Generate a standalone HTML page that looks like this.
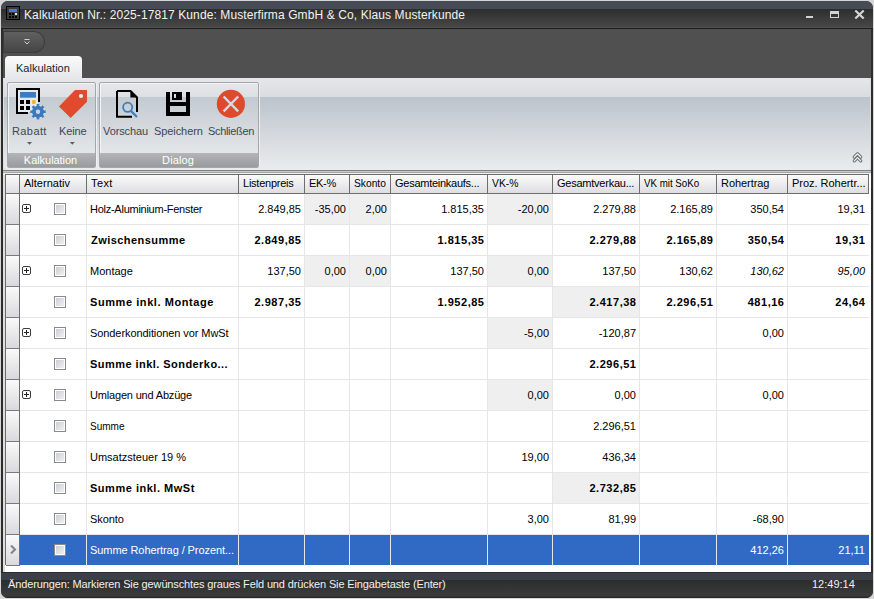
<!DOCTYPE html>
<html><head><meta charset="utf-8">
<style>
*{box-sizing:border-box;margin:0;padding:0}
html,body{width:874px;height:599px;overflow:hidden;background:#d6d6d6;font-family:"Liberation Sans",sans-serif;font-size:11px;color:#000}
.a{position:absolute}
#win{left:1px;top:1px;width:872px;height:597px;border-radius:7px;background:#2d2d2d}
#tb{left:1px;top:1px;width:872px;height:28px;border-radius:7px 7px 0 0;background:linear-gradient(#474b56 0,#474b56 8px,#2e2e2e 8px,#474747 26px,#585858 27px)}
#tbline{left:1px;top:28px;width:872px;height:1px;background:#1c1c1c}
#title{left:24px;top:8px;font-size:12px;color:#f2f2f2;white-space:nowrap;line-height:14px;letter-spacing:0.1px}
#mid{left:3px;top:29px;width:868px;height:50px;background:#505050}
#qat{left:3px;top:31px;width:42px;height:22px;border-radius:0 11px 11px 0;background:linear-gradient(#616161,#444444);box-shadow:inset 0 0 0 1px #3c3c3c}
#tab{left:5px;top:56px;width:77px;height:24px;border-radius:4px 4px 0 0;background:linear-gradient(#fbfbfb,#e4e6e9)}
#rib{left:4px;top:78px;width:866px;box-shadow:1px 0 0 #dcdcdc;height:92px;border-radius:0 4px 4px 4px;background:linear-gradient(#e5e7ea 0,#d9dce0 19px,#bcc3cb 19px,#e9ecee 91px)}
.grp{top:82px;height:86px;border:1px solid #a3a7ac;border-radius:2px;background:rgba(255,255,255,0.12);box-shadow:inset 1px 1px 0 #f3f4f6, 1px 0 0 #eef0f2}
.gcap{left:0;bottom:0;width:100%;height:14px;border-radius:0 0 1px 1px;background:linear-gradient(#b3b5b7,#999b9d);color:#fff;text-align:center;line-height:14px;font-size:11px}
.rl{font-size:11px;color:#3e4650;white-space:nowrap;line-height:13px}
.arr{width:0;height:0;border-left:3px solid transparent;border-right:3px solid transparent;border-top:3px solid #5a5f66}
#below{left:3px;top:170px;width:868px;height:5px;background:linear-gradient(#808080 0,#808080 1px,#c8c8c8 1px,#c8c8c8 2px,#a8a8a8 2px,#a8a8a8 3px,#efefef 3px)}
#grid{left:5px;top:174px;width:866px;height:398px;background:#fff}
#status{left:1px;top:572px;width:872px;height:26px;border-radius:0 0 7px 7px;background:linear-gradient(#2a2a2e 0,#2a2a2e 1px,#3c3f48 1px,#3c3f48 8px,#2b2d2d 8px,#3b3b3b 24px,#2a2a2a 25px)}
.st{color:#f0f0f0;font-size:11px;white-space:nowrap;line-height:13px}
.hdr{background:linear-gradient(#fbfbfb,#dedee2)}
.ht{white-space:nowrap;line-height:13px;color:#000}
.ind{background:linear-gradient(#fafafa,#d9d9dd)}
.ct{white-space:nowrap;line-height:13px;color:#000}
.ct.b{font-weight:bold}
.ct.i{font-style:italic}
.ct.s{color:#fff}
.plus{width:9px;height:9px;border:1px solid #3c3c3c;border-radius:2px;background:#fff}
.plus:before{content:"";position:absolute;left:1px;top:3px;width:5px;height:1px;background:#222}
.plus:after{content:"";position:absolute;left:3px;top:1px;width:1px;height:5px;background:#222}
.cb{width:12px;height:12px;border:1px solid #8a8a8a;background:linear-gradient(135deg,#c6cad2,#f4f4f4);box-shadow:inset 0 0 0 1px #fff}

</style></head><body>
<div class="a" id="win"></div>
<div class="a" id="tb"></div>
<div class="a" id="tbline"></div>
<svg class="a" style="left:6px;top:6px" width="14" height="14" viewBox="0 0 14 14">
  <rect x="0" y="0" width="14" height="14" fill="#000"/>
  <rect x="1" y="1" width="12" height="12" fill="#3c3c3c"/>
  <rect x="3" y="3" width="8" height="3" fill="#3f7fcb"/>
  <rect x="3" y="7" width="2" height="2" fill="#000"/><rect x="6" y="7" width="2" height="2" fill="#000"/><rect x="9" y="7" width="2" height="2" fill="#f3e4c8"/>
  <rect x="3" y="10" width="2" height="2" fill="#000"/><rect x="6" y="10" width="2" height="2" fill="#000"/><rect x="9" y="10" width="2" height="2" fill="#000"/>
</svg>
<div class="a" id="title">Kalkulation Nr.: 2025-17817 Kunde: Musterfirma GmbH &amp; Co, Klaus Musterkunde</div>
<div class="a" style="left:806px;top:16px;width:7px;height:2px;background:#d2d2d2"></div>
<div class="a" style="left:830px;top:11px;width:9px;height:7px;border:1px solid #d2d2d2;border-top-width:3px"></div>
<svg class="a" style="left:854px;top:10px" width="11" height="9" viewBox="0 0 11 9"><path d="M1.3 0.5 L9.7 8.5 M9.7 0.5 L1.3 8.5" stroke="#d4d4d4" stroke-width="2.2"/></svg>

<div class="a" id="mid"></div>
<div class="a" id="qat"></div>
<svg class="a" style="left:23px;top:38px" width="8" height="8" viewBox="0 0 8 8"><path d="M1.5 1.5 H6.5 M1.5 3.5 L4 6 L6.5 3.5" stroke="#d0d0d0" stroke-width="1" fill="none"/></svg>
<div class="a" id="tab"></div>
<div class="a" style="left:16px;top:62px;color:#1a1e2a;line-height:13px;letter-spacing:0px">Kalkulation</div>

<div class="a" style="left:3px;top:78px;width:868px;height:494px;background:#dedede"></div>
<div class="a" id="rib"></div>
<div class="a grp" style="left:7px;width:89px"><div class="a gcap" style="letter-spacing:-0.05px;text-indent:-2px">Kalkulation</div></div>
<div class="a grp" style="left:99px;width:160px"><div class="a gcap" style="letter-spacing:0.1px;text-indent:-2px">Dialog</div></div>
<svg class="a" style="left:0;top:78px" width="270" height="92" viewBox="0 78 270 92">
  <!-- calculator -->
  <rect x="18" y="90" width="20" height="22" fill="#e6eaef"/>
  <path d="M16 88 H40 V102 H38 V90 H18 V112 H28 V114 H16 Z" fill="#000"/>
  <rect x="20" y="92" width="16" height="5.7" fill="#3d7cc0"/>
  <rect x="20" y="100" width="4" height="4" fill="#000"/><rect x="26" y="100" width="4" height="4" fill="#000"/>
  <rect x="20" y="106" width="4" height="4" fill="#000"/><rect x="26" y="106" width="4" height="4" fill="#000"/>
  <rect x="32" y="100" width="3.6" height="4" rx="1.2" fill="#f0b040"/>
  <g transform="translate(38 111.7)" fill="#3b79bc">
    <circle r="7" fill="#e9edf2" opacity="0.8"/>
    <circle r="6"/>
    <rect x="-1.3" y="-7.7" width="2.6" height="15.4"/>
    <rect x="-1.3" y="-7.7" width="2.6" height="15.4" transform="rotate(45)"/>
    <rect x="-1.3" y="-7.7" width="2.6" height="15.4" transform="rotate(90)"/>
    <rect x="-1.3" y="-7.7" width="2.6" height="15.4" transform="rotate(135)"/>
    <circle r="2.2" fill="#c9d6e4"/>
  </g>
  <!-- tag -->
  <path d="M75 90 H87 V101.7 L70.7 118 L59 106.4 Z" fill="#e04a2d"/>
  <circle cx="81" cy="96" r="2.1" fill="#ececec"/>
  <!-- document -->
  <path d="M117 91 H130.5 L137 97.5 V112 M132 116.7 H117 V91" stroke="#000" stroke-width="2" fill="none"/>
  <path d="M130.4 90 L138 97.6 H130.4 Z" fill="#000"/>
  <circle cx="127.7" cy="107.3" r="4.6" stroke="#3a7dc2" stroke-width="1.8" fill="none"/>
  <path d="M131 111 L137 117" stroke="#3a7dc2" stroke-width="2.2"/>
  <!-- floppy -->
  <path fill="#000" fill-rule="evenodd" d="M166 92 H190 V116 H166 Z M170 92 H172 V100 H182 V92 H186 V102 H170 Z M174 94 H176 V98 H174 Z M170 106 H186 V112 H170 Z"/>
  <!-- close -->
  <circle cx="230.9" cy="103.9" r="14.1" fill="#dd4a2c"/>
  <path d="M223.6 96.5 L238.2 111.3 M238.2 96.5 L223.6 111.3" stroke="#d6d9dd" stroke-width="2.4"/>
  <!-- dropdown arrows -->
  <path d="M27 142 H32 L29.5 144.8 Z M69.8 142 H74.8 L72.3 144.8 Z" fill="#5a5f66"/>
</svg>
<div class="a rl" style="left:12px;top:125px;letter-spacing:0.4px">Rabatt</div>
<div class="a rl" style="left:59px;top:125px;letter-spacing:-0.15px">Keine</div>
<div class="a rl" style="left:103px;top:125px;letter-spacing:-0.1px">Vorschau</div>
<div class="a rl" style="left:154px;top:125px;letter-spacing:-0.08px">Speichern</div>
<div class="a rl" style="left:208px;top:125px;letter-spacing:-0.32px">Schließen</div>
<svg class="a" style="left:850px;top:148px" width="16" height="16" viewBox="850 148 16 16"><path d="M854.3 157 L857.5 153.8 L860.7 157 M854.3 160.8 L857.5 157.6 L860.7 160.8" stroke="#707478" stroke-width="3.3" fill="none" stroke-linecap="round" stroke-linejoin="round"/><path d="M854.3 157 L857.5 153.8 L860.7 157 M854.3 160.8 L857.5 157.6 L860.7 160.8" stroke="#f4f6f8" stroke-width="1.2" fill="none" stroke-linecap="round" stroke-linejoin="round"/></svg>

<div class="a" id="below"></div>
<div class="a" id="grid"></div>
<div class="a" style="left:5px;top:174px;width:864px;height:1px;background:#6e6e6e"></div>
<div class="a" style="left:5px;top:193px;width:864px;height:1px;background:#6e6e6e"></div>
<div class="a hdr" style="left:5px;top:175px;width:864px;height:18px"></div>
<div class="a" style="left:5px;top:174px;width:1px;height:391px;background:#6e6e6e"></div>
<div class="a" style="left:19px;top:175px;width:1px;height:18px;background:#6e6e6e"></div>
<div class="a" style="left:86px;top:175px;width:1px;height:18px;background:#6e6e6e"></div>
<div class="a" style="left:238px;top:175px;width:1px;height:18px;background:#6e6e6e"></div>
<div class="a" style="left:304px;top:175px;width:1px;height:18px;background:#6e6e6e"></div>
<div class="a" style="left:349px;top:175px;width:1px;height:18px;background:#6e6e6e"></div>
<div class="a" style="left:390px;top:175px;width:1px;height:18px;background:#6e6e6e"></div>
<div class="a" style="left:487px;top:175px;width:1px;height:18px;background:#6e6e6e"></div>
<div class="a" style="left:552px;top:175px;width:1px;height:18px;background:#6e6e6e"></div>
<div class="a" style="left:639px;top:175px;width:1px;height:18px;background:#6e6e6e"></div>
<div class="a" style="left:716px;top:175px;width:1px;height:18px;background:#6e6e6e"></div>
<div class="a" style="left:787px;top:175px;width:1px;height:18px;background:#6e6e6e"></div>
<div class="a" style="left:868px;top:175px;width:1px;height:18px;background:#6e6e6e"></div>
<div class="a ht" style="left:24px;top:177px;letter-spacing:0.01px">Alternativ</div>
<div class="a ht" style="left:91px;top:177px;letter-spacing:0.39px">Text</div>
<div class="a ht" style="left:243px;top:177px;letter-spacing:-0.24px">Listenpreis</div>
<div class="a ht" style="left:309px;top:177px;letter-spacing:-0.31px">EK-%</div>
<div class="a ht" style="left:354px;top:177px;letter-spacing:0px;transform:scaleX(0.93);transform-origin:0 0">Skonto</div>
<div class="a ht" style="left:395px;top:177px;letter-spacing:-0.26px">Gesamteinkaufs...</div>
<div class="a ht" style="left:492px;top:177px;letter-spacing:0px;transform:scaleX(0.94);transform-origin:0 0">VK-%</div>
<div class="a ht" style="left:557px;top:177px;letter-spacing:-0.24px">Gesamtverkau...</div>
<div class="a ht" style="left:644px;top:177px;letter-spacing:0px;transform:scaleX(0.885);transform-origin:0 0">VK mit SoKo</div>
<div class="a ht" style="left:721px;top:177px;letter-spacing:-0.06px">Rohertrag</div>
<div class="a ht" style="left:792px;top:177px;letter-spacing:-0.03px">Proz. Rohertr...</div>
<div class="a ind" style="left:6px;top:194px;width:13px;height:30px"></div>
<div class="a" style="left:6px;top:224px;width:13px;height:1px;background:#7a7a7a"></div>
<div class="a ind" style="left:6px;top:225px;width:13px;height:30px"></div>
<div class="a" style="left:6px;top:255px;width:13px;height:1px;background:#7a7a7a"></div>
<div class="a ind" style="left:6px;top:256px;width:13px;height:30px"></div>
<div class="a" style="left:6px;top:286px;width:13px;height:1px;background:#7a7a7a"></div>
<div class="a ind" style="left:6px;top:287px;width:13px;height:30px"></div>
<div class="a" style="left:6px;top:317px;width:13px;height:1px;background:#7a7a7a"></div>
<div class="a ind" style="left:6px;top:318px;width:13px;height:30px"></div>
<div class="a" style="left:6px;top:348px;width:13px;height:1px;background:#7a7a7a"></div>
<div class="a ind" style="left:6px;top:349px;width:13px;height:30px"></div>
<div class="a" style="left:6px;top:379px;width:13px;height:1px;background:#7a7a7a"></div>
<div class="a ind" style="left:6px;top:380px;width:13px;height:30px"></div>
<div class="a" style="left:6px;top:410px;width:13px;height:1px;background:#7a7a7a"></div>
<div class="a ind" style="left:6px;top:411px;width:13px;height:30px"></div>
<div class="a" style="left:6px;top:441px;width:13px;height:1px;background:#7a7a7a"></div>
<div class="a ind" style="left:6px;top:442px;width:13px;height:30px"></div>
<div class="a" style="left:6px;top:472px;width:13px;height:1px;background:#7a7a7a"></div>
<div class="a ind" style="left:6px;top:473px;width:13px;height:30px"></div>
<div class="a" style="left:6px;top:503px;width:13px;height:1px;background:#7a7a7a"></div>
<div class="a ind" style="left:6px;top:504px;width:13px;height:30px"></div>
<div class="a" style="left:6px;top:534px;width:13px;height:1px;background:#7a7a7a"></div>
<div class="a ind" style="left:6px;top:535px;width:13px;height:30px"></div>
<div class="a" style="left:6px;top:565px;width:13px;height:1px;background:#7a7a7a"></div>
<div class="a" style="left:19px;top:194px;width:1px;height:372px;background:#6e6e6e"></div>
<div class="a" style="left:305px;top:194px;width:44px;height:30px;background:#efefef"></div>
<div class="a" style="left:350px;top:194px;width:40px;height:30px;background:#efefef"></div>
<div class="a" style="left:488px;top:194px;width:64px;height:30px;background:#efefef"></div>
<div class="a" style="left:20px;top:224px;width:849px;height:1px;background:#e6e6e6"></div>
<div class="a plus" style="left:22px;top:204px"></div>
<div class="a cb" style="left:54px;top:203px"></div>
<div class="a ct" style="left:90px;top:203px;letter-spacing:-0.26px">Holz-Aluminium-Fenster</div>
<div class="a ct r" style="right:573px;top:203px;letter-spacing:0px;margin-right:0px">2.849,85</div>
<div class="a ct r" style="right:528px;top:203px;letter-spacing:0px;margin-right:0px">-35,00</div>
<div class="a ct r" style="right:487px;top:203px;letter-spacing:0px;margin-right:0px">2,00</div>
<div class="a ct r" style="right:390px;top:203px;letter-spacing:0px;margin-right:0px">1.815,35</div>
<div class="a ct r" style="right:325px;top:203px;letter-spacing:0px;margin-right:0px">-20,00</div>
<div class="a ct r" style="right:238px;top:203px;letter-spacing:0px;margin-right:0px">2.279,88</div>
<div class="a ct r" style="right:161px;top:203px;letter-spacing:0px;margin-right:0px">2.165,89</div>
<div class="a ct r" style="right:90px;top:203px;letter-spacing:0px;margin-right:0px">350,54</div>
<div class="a ct r" style="right:9px;top:203px;letter-spacing:0px;margin-right:0px">19,31</div>
<div class="a" style="left:20px;top:255px;width:849px;height:1px;background:#e6e6e6"></div>
<div class="a cb" style="left:54px;top:234px"></div>
<div class="a ct b" style="left:91px;top:234px;letter-spacing:0.45px">Zwischensumme</div>
<div class="a ct r b" style="right:573px;top:234px;letter-spacing:0.53px;margin-right:-0.53px">2.849,85</div>
<div class="a ct r b" style="right:390px;top:234px;letter-spacing:0.53px;margin-right:-0.53px">1.815,35</div>
<div class="a ct r b" style="right:238px;top:234px;letter-spacing:0.53px;margin-right:-0.53px">2.279,88</div>
<div class="a ct r b" style="right:161px;top:234px;letter-spacing:0.53px;margin-right:-0.53px">2.165,89</div>
<div class="a ct r b" style="right:90px;top:234px;letter-spacing:0.53px;margin-right:-0.53px">350,54</div>
<div class="a ct r b" style="right:9px;top:234px;letter-spacing:0.53px;margin-right:-0.53px">19,31</div>
<div class="a" style="left:305px;top:256px;width:44px;height:30px;background:#efefef"></div>
<div class="a" style="left:350px;top:256px;width:40px;height:30px;background:#efefef"></div>
<div class="a" style="left:488px;top:256px;width:64px;height:30px;background:#efefef"></div>
<div class="a" style="left:20px;top:286px;width:849px;height:1px;background:#e6e6e6"></div>
<div class="a plus" style="left:22px;top:266px"></div>
<div class="a cb" style="left:54px;top:265px"></div>
<div class="a ct" style="left:90px;top:265px;letter-spacing:-0.0px">Montage</div>
<div class="a ct r" style="right:573px;top:265px;letter-spacing:0px;margin-right:0px">137,50</div>
<div class="a ct r" style="right:528px;top:265px;letter-spacing:0px;margin-right:0px">0,00</div>
<div class="a ct r" style="right:487px;top:265px;letter-spacing:0px;margin-right:0px">0,00</div>
<div class="a ct r" style="right:390px;top:265px;letter-spacing:0px;margin-right:0px">137,50</div>
<div class="a ct r" style="right:325px;top:265px;letter-spacing:0px;margin-right:0px">0,00</div>
<div class="a ct r" style="right:238px;top:265px;letter-spacing:0px;margin-right:0px">137,50</div>
<div class="a ct r" style="right:161px;top:265px;letter-spacing:0px;margin-right:0px">130,62</div>
<div class="a ct r i" style="right:90px;top:265px;letter-spacing:0px;margin-right:0px">130,62</div>
<div class="a ct r i" style="right:9px;top:265px;letter-spacing:0px;margin-right:0px">95,00</div>
<div class="a" style="left:553px;top:287px;width:86px;height:30px;background:#efefef"></div>
<div class="a" style="left:20px;top:317px;width:849px;height:1px;background:#e6e6e6"></div>
<div class="a cb" style="left:54px;top:296px"></div>
<div class="a ct b" style="left:90px;top:296px;letter-spacing:0.57px">Summe inkl. Montage</div>
<div class="a ct r b" style="right:573px;top:296px;letter-spacing:0.53px;margin-right:-0.53px">2.987,35</div>
<div class="a ct r b" style="right:390px;top:296px;letter-spacing:0.53px;margin-right:-0.53px">1.952,85</div>
<div class="a ct r b" style="right:238px;top:296px;letter-spacing:0.53px;margin-right:-0.53px">2.417,38</div>
<div class="a ct r b" style="right:161px;top:296px;letter-spacing:0.53px;margin-right:-0.53px">2.296,51</div>
<div class="a ct r b" style="right:90px;top:296px;letter-spacing:0.53px;margin-right:-0.53px">481,16</div>
<div class="a ct r b" style="right:9px;top:296px;letter-spacing:0.53px;margin-right:-0.53px">24,64</div>
<div class="a" style="left:488px;top:318px;width:64px;height:30px;background:#efefef"></div>
<div class="a" style="left:20px;top:348px;width:849px;height:1px;background:#e6e6e6"></div>
<div class="a plus" style="left:22px;top:328px"></div>
<div class="a cb" style="left:54px;top:327px"></div>
<div class="a ct" style="left:90px;top:327px;letter-spacing:-0.08px">Sonderkonditionen vor MwSt</div>
<div class="a ct r" style="right:325px;top:327px;letter-spacing:0px;margin-right:0px">-5,00</div>
<div class="a ct r" style="right:238px;top:327px;letter-spacing:0px;margin-right:0px">-120,87</div>
<div class="a ct r" style="right:90px;top:327px;letter-spacing:0px;margin-right:0px">0,00</div>
<div class="a" style="left:20px;top:379px;width:849px;height:1px;background:#e6e6e6"></div>
<div class="a cb" style="left:54px;top:358px"></div>
<div class="a ct b" style="left:90px;top:358px;letter-spacing:0.45px">Summe inkl. Sonderko...</div>
<div class="a ct r b" style="right:238px;top:358px;letter-spacing:0.53px;margin-right:-0.53px">2.296,51</div>
<div class="a" style="left:488px;top:380px;width:64px;height:30px;background:#efefef"></div>
<div class="a" style="left:20px;top:410px;width:849px;height:1px;background:#e6e6e6"></div>
<div class="a plus" style="left:22px;top:390px"></div>
<div class="a cb" style="left:54px;top:389px"></div>
<div class="a ct" style="left:90px;top:389px;letter-spacing:-0.18px">Umlagen und Abzüge</div>
<div class="a ct r" style="right:325px;top:389px;letter-spacing:0px;margin-right:0px">0,00</div>
<div class="a ct r" style="right:238px;top:389px;letter-spacing:0px;margin-right:0px">0,00</div>
<div class="a ct r" style="right:90px;top:389px;letter-spacing:0px;margin-right:0px">0,00</div>
<div class="a" style="left:20px;top:441px;width:849px;height:1px;background:#e6e6e6"></div>
<div class="a cb" style="left:54px;top:420px"></div>
<div class="a ct" style="left:90px;top:420px;letter-spacing:0px;transform:scaleX(0.91);transform-origin:0 0">Summe</div>
<div class="a ct r" style="right:238px;top:420px;letter-spacing:0px;margin-right:0px">2.296,51</div>
<div class="a" style="left:20px;top:472px;width:849px;height:1px;background:#e6e6e6"></div>
<div class="a cb" style="left:54px;top:451px"></div>
<div class="a ct" style="left:90px;top:451px;letter-spacing:0.0px">Umsatzsteuer 19 %</div>
<div class="a ct r" style="right:325px;top:451px;letter-spacing:0px;margin-right:0px">19,00</div>
<div class="a ct r" style="right:238px;top:451px;letter-spacing:0px;margin-right:0px">436,34</div>
<div class="a" style="left:553px;top:473px;width:86px;height:30px;background:#efefef"></div>
<div class="a" style="left:20px;top:503px;width:849px;height:1px;background:#e6e6e6"></div>
<div class="a cb" style="left:54px;top:482px"></div>
<div class="a ct b" style="left:90px;top:482px;letter-spacing:0.52px">Summe inkl. MwSt</div>
<div class="a ct r b" style="right:238px;top:482px;letter-spacing:0.53px;margin-right:-0.53px">2.732,85</div>
<div class="a" style="left:20px;top:534px;width:849px;height:1px;background:#e6e6e6"></div>
<div class="a cb" style="left:54px;top:513px"></div>
<div class="a ct" style="left:90px;top:513px;letter-spacing:-0.1px">Skonto</div>
<div class="a ct r" style="right:325px;top:513px;letter-spacing:0px;margin-right:0px">3,00</div>
<div class="a ct r" style="right:238px;top:513px;letter-spacing:0px;margin-right:0px">81,99</div>
<div class="a ct r" style="right:90px;top:513px;letter-spacing:0px;margin-right:0px">-68,90</div>
<div class="a" style="left:20px;top:535px;width:849px;height:30px;background:#316ac5"></div>
<div class="a cb" style="left:54px;top:544px"></div>
<div class="a ct s" style="left:90px;top:544px;letter-spacing:-0.08px">Summe Rohertrag / Prozent...</div>
<div class="a ct r s" style="right:90px;top:544px;letter-spacing:0px;margin-right:0px">412,26</div>
<div class="a ct r s" style="right:9px;top:544px;letter-spacing:0px;margin-right:0px">21,11</div>
<div class="a" style="left:86px;top:194px;width:1px;height:372px;background:#e6e6e6"></div>
<div class="a" style="left:238px;top:194px;width:1px;height:372px;background:#e6e6e6"></div>
<div class="a" style="left:304px;top:194px;width:1px;height:372px;background:#e6e6e6"></div>
<div class="a" style="left:349px;top:194px;width:1px;height:372px;background:#e6e6e6"></div>
<div class="a" style="left:390px;top:194px;width:1px;height:372px;background:#e6e6e6"></div>
<div class="a" style="left:487px;top:194px;width:1px;height:372px;background:#e6e6e6"></div>
<div class="a" style="left:552px;top:194px;width:1px;height:372px;background:#e6e6e6"></div>
<div class="a" style="left:639px;top:194px;width:1px;height:372px;background:#e6e6e6"></div>
<div class="a" style="left:716px;top:194px;width:1px;height:372px;background:#e6e6e6"></div>
<div class="a" style="left:787px;top:194px;width:1px;height:372px;background:#e6e6e6"></div>
<svg class="a" style="left:8px;top:543px" width="10" height="12" viewBox="0 0 10 12"><path d="M3 2.5 L7 6.5 L3 10.5" stroke="#858585" stroke-width="2.1" fill="none"/></svg>
<div class="a" id="status"></div>
<div class="a st" style="left:8px;top:578px;letter-spacing:-0.13px">Änderungen: Markieren Sie gewünschtes graues Feld und drücken Sie Eingabetaste (Enter)</div>
<div class="a st" style="left:812px;top:578px">12:49:14</div>

</body></html>
